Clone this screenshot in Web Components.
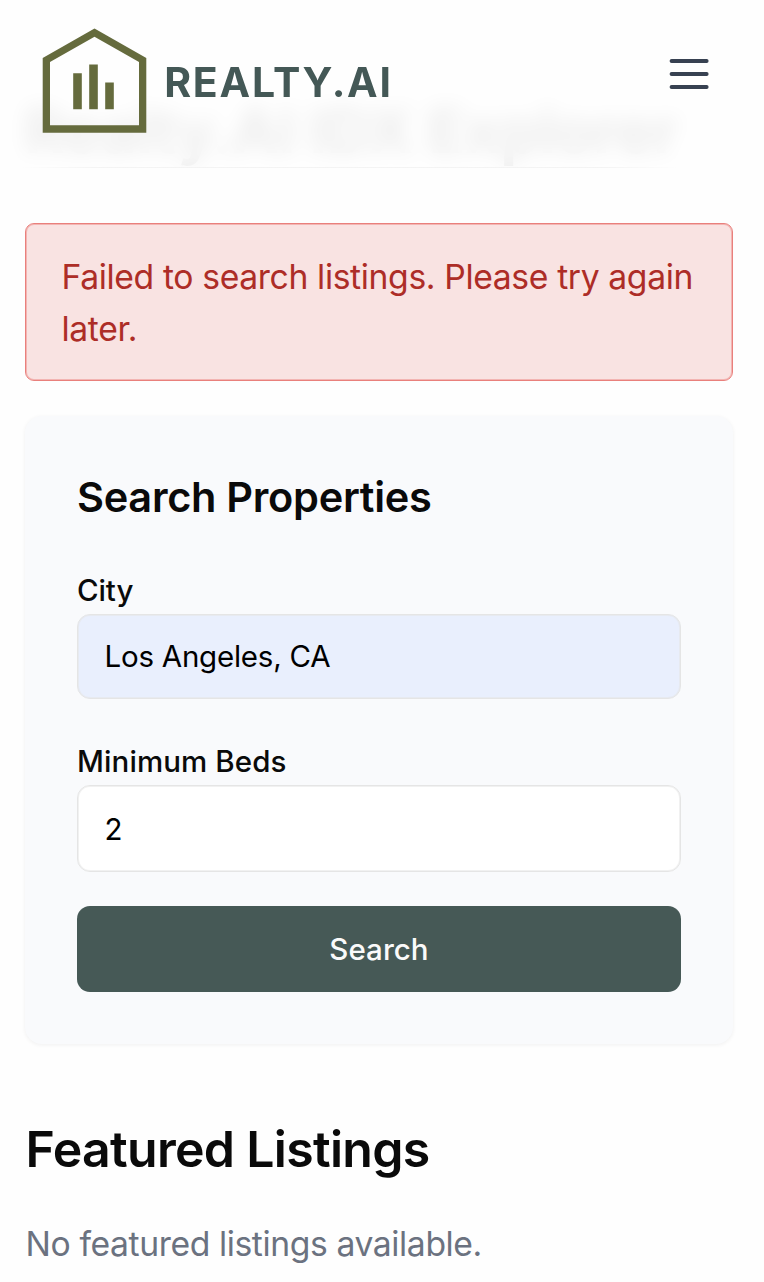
<!DOCTYPE html>
<html lang="en">
<head>
<meta charset="utf-8">
<title>Realty.AI IDX Explorer</title>
<style>
html,body{margin:0;height:1282px;overflow:hidden;background:#fefefe}
body{font-family:Inter,"Liberation Sans",sans-serif;color:#0a0a0a}
</style>
</head>
<body>
<idx-page></idx-page>
<script>
const define = (name, html) => customElements.define(name, class extends HTMLElement {
  constructor() {
    super();
    const t = document.createElement('template');
    t.innerHTML = html;
    this.attachShadow({mode: 'open'}).append(t.content.cloneNode(true));
  }
});

define('brand-logo', `
<style>
:host{display:flex;align-items:flex-start}
svg{display:block;flex:none}
span{font-size:41px;font-weight:700;letter-spacing:1.75px;line-height:50px;color:#445856;margin:57px 0 0 17.2px;white-space:nowrap}
</style>
<svg width="147" height="136" viewBox="0 0 147 136" fill="#656b3d">
  <path fill-rule="evenodd" d="M94.5 28.5 146.3 58V132.7H42.7V58ZM94.5 36.7 50 62V125.2H139V62Z"/>
  <path d="M73.2 73.2h8.6v36h-8.6zM89.2 64.4h8.6v44.8h-8.6zM105.2 82.4h8.6v26.8h-8.6z"/>
</svg>
<span>REALTY.AI</span>`);

define('menu-button', `
<style>
:host{display:block}
button{all:unset;display:block}
svg{display:block}
</style>
<button aria-label="Menu"><svg width="52" height="52" viewBox="0 0 52 52" stroke="#374151" stroke-width="4" stroke-linecap="round"><path d="M8.6 13H43.6M8.6 26H43.6M8.6 39H43.6"/></svg></button>`);

define('site-header', `
<style>
:host{position:absolute;inset:0 0 auto 0;height:167px;display:flex;justify-content:space-between;align-items:flex-start;box-sizing:border-box;padding-right:49px;background:rgba(254,254,254,.93);backdrop-filter:blur(10px);z-index:2}
menu-button{margin-top:48px}
i{position:absolute;left:18px;width:664px;top:167px;height:1px;background:linear-gradient(90deg,rgba(254,254,254,.6),rgba(236,236,236,.6) 12%,rgba(236,236,236,.6) 88%,rgba(254,254,254,.6))}
</style>
<brand-logo></brand-logo><menu-button></menu-button><i></i>`);

define('page-title', `
<style>
:host{display:block;height:168px}
h1{margin:0;padding:92.5px 0 0 24px;font-size:62px;line-height:75px;font-weight:700;letter-spacing:-.374px;white-space:nowrap}
</style>
<h1><slot></slot></h1>`);

define('error-alert', `
<style>
:host{display:block;margin:55px 31px 0 25px;height:158px;box-sizing:border-box;padding:26.5px 30px 0 35.5px;border:1px solid #e9807c;border-radius:9px;background:#f9e3e2;box-shadow:inset 0 0 0 1px #f3b5b3;color:#ad2d27;font-size:33.7px;line-height:52px;letter-spacing:-.366px}
</style>
<slot></slot>`);

define('form-field', `
<style>
:host{display:block}
label{display:block;font-size:29.5px;font-weight:500;line-height:36px;letter-spacing:var(--label-ls,0)}
.box{box-sizing:border-box;height:var(--h,85px);margin-top:6px;padding:0 26.5px var(--drop,1px);display:flex;align-items:center;border:1px solid #e5e5e5;box-shadow:inset 0 0 0 1px rgba(229,229,229,.55);border-radius:13px;background:var(--fill,#fff);font-size:29.5px;line-height:36px;letter-spacing:-.235px;color:#000}
</style>
<label><slot name="label"></slot></label>
<div class="box"><slot></slot></div>`);

define('search-button', `
<style>
:host{display:block}
button{all:unset;box-sizing:border-box;display:flex;width:100%;height:86px;align-items:center;justify-content:center;border-radius:13px;background:#465956;color:#fafafa;font-size:29.5px;line-height:36px;font-weight:500;letter-spacing:.05px}
</style>
<button><slot></slot></button>`);

define('search-card', `
<style>
:host{display:flex;flex-direction:column;margin:35px 31px 0 25px;height:628px;box-sizing:border-box;padding:55px 52px 0 52px;border-radius:17px;background:#f9fafc;box-shadow:0 1px 4px rgba(0,0,0,.06)}
h2{margin:0;font-size:41.5px;line-height:52px;font-weight:600;letter-spacing:-.293px}
form-field:first-of-type{margin-top:49px;--fill:#e9effd;--label-ls:-.1px}
form-field:last-of-type{margin-top:44px;--h:87px;--label-ls:.1px;--drop:0px}
search-button{margin-top:34px}
</style>
<h2>Search Properties</h2>
<form-field><span slot="label">City</span>Los Angeles, CA</form-field>
<form-field><span slot="label">Minimum Beds</span>2</form-field>
<search-button>Search</search-button>`);

define('featured-listings', `
<style>
:host{display:block;margin:74px 25px 0 25.6px}
h2{margin:0;font-size:50px;line-height:62px;font-weight:600;letter-spacing:-.7px}
p{margin:38px 0 0;font-size:33.7px;line-height:52px;letter-spacing:-.403px;color:#6b7280}
</style>
<h2>Featured Listings</h2>
<p>No featured listings available.</p>`);

define('idx-page', `
<style>
:host{display:block;position:relative;height:1282px;overflow:hidden}
</style>
<page-title>Realty.AI IDX Explorer</page-title>
<site-header></site-header>
<error-alert>Failed to search listings. Please try again later.</error-alert>
<search-card></search-card>
<featured-listings></featured-listings>`);
</script>
</body>
</html>
